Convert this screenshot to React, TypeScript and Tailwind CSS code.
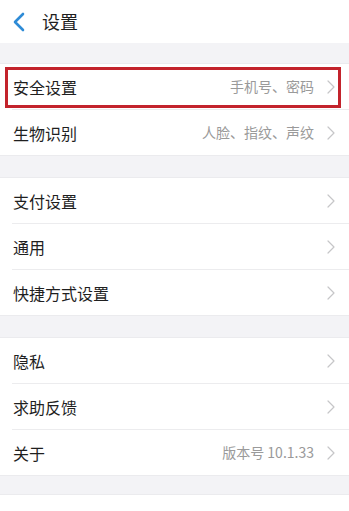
import React from 'react';

type Item = { label: string; value?: string; highlight?: boolean };

const sections: Item[][] = [
  [
    { label: '安全设置', value: '手机号、密码', highlight: true },
    { label: '生物识别', value: '人脸、指纹、声纹' },
  ],
  [{ label: '支付设置' }, { label: '通用' }, { label: '快捷方式设置' }],
  [{ label: '隐私' }, { label: '求助反馈' }, { label: '关于', value: '版本号 10.1.33' }],
  [{ label: '账号与安全' }],
];

function Chevron() {
  return (
    <svg width="8" height="14" viewBox="0 0 8 14" fill="none" className="shrink-0">
      <path d="M1 1l6 6-6 6" stroke="#c6c6c8" strokeWidth="1.2" strokeLinecap="round" strokeLinejoin="round" />
    </svg>
  );
}

function Row({ item, last }: { item: Item; last: boolean }) {
  return (
    <div className="relative">
      <div className="flex h-[45px] items-center pl-[13px] pr-[14px]">
        <span className="flex-1 text-[16px] text-[#1f1f1f]">{item.label}</span>
        {item.value && <span className="mr-[13px] text-[14px] text-[#9a9a9a]">{item.value}</span>}
        <Chevron />
      </div>
      {!last && <div className="ml-3 h-px bg-[#ececee]" />}
      {item.highlight && (
        <div className="absolute left-[5px] right-[8px] top-[3px] bottom-[2px] border-[3px] border-[#c3232c]" />
      )}
    </div>
  );
}

export default function App() {
  return (
    <div
      className="h-[511px] w-[349px] overflow-hidden bg-[#f3f3f6]"
      style={{ fontFamily: '"Noto Sans CJK SC", "Noto Sans", sans-serif' }}
    >
      <div className="flex h-[43px] items-center bg-white">
        <svg width="14" height="20" viewBox="0 0 14 20" fill="none" className="ml-[12px]">
          <path d="M11 2L3 10l8 8" stroke="#2e8bd6" strokeWidth="2.6" strokeLinecap="round" strokeLinejoin="round" />
        </svg>
        <span className="ml-[16px] text-[18px] text-[#1f1f1f]">设置</span>
      </div>
      <div className="flex flex-col gap-[21px] pt-[20px]">
        {sections.map((sec, i) => (
          <div key={i} className="border-y border-[#ebebee] bg-white last:-mt-[3px]">
            {sec.map((item, j) => (
              <Row key={item.label} item={item} last={j === sec.length - 1} />
            ))}
          </div>
        ))}
      </div>
    </div>
  );
}
